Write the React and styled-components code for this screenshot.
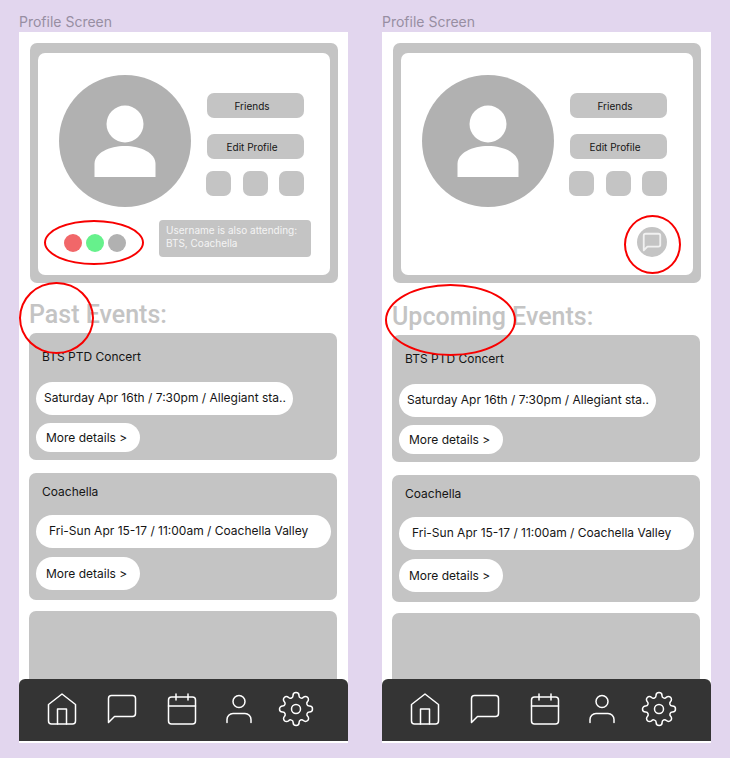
import React from "react";
import styled, { createGlobalStyle } from "styled-components";
import {
  FiHome,
  FiMessageSquare,
  FiCalendar,
  FiUser,
  FiSettings,
} from "react-icons/fi";

const GlobalStyle = createGlobalStyle`
  * { box-sizing: border-box; }
  body {
    margin: 0;
    min-height: 100vh;
    background: #e2d6ee;
    font-family: Inter, "Liberation Sans", sans-serif;
    color: #151515;
  }
  button { font: inherit; color: inherit; border: 0; padding: 0; cursor: pointer; }
  h1, h2, h3, p { margin: 0; font-weight: 400; }
`;

const Board = styled.div`
  display: grid;
  grid-template-columns: 1fr 1fr;
  gap: 34px;
  padding: 13px 19px 15px;
`;

const Frame = styled.section`
  display: flex;
  flex-direction: column;
  min-width: 0;
`;

const FrameLabel = styled.h1`
  height: 19px;
  font-size: 14px;
  line-height: 18px;
  color: #978ea2;
`;

const Screen = styled.div`
  flex: 1;
  display: flex;
  flex-direction: column;
  padding: 11px 0 2px;
  background: #fff;
`;

const ProfileCard = styled.div`
  margin: 0 10px 0 11px;
  padding: 10px 8px 8px;
  border-radius: 7px;
  background: #c4c4c4;
`;

const ProfileInner = styled.div`
  padding: 22px 0 18px;
  border-radius: 7px;
  background: #fff;
`;

const ProfileTop = styled.div`
  display: flex;
  gap: 16px;
  padding-left: 21px;
`;

const Avatar = styled.svg`
  flex: none;
  width: 132px;
  height: 132px;
`;

const Actions = styled.div`
  display: flex;
  flex-direction: column;
  gap: 16px;
  width: 97px;
  padding-top: 18px;
`;

const ActionButton = styled.button`
  height: 25px;
  border-radius: 7px;
  background: #c4c4c4;
  font-size: 10px;
  line-height: 24px;
  padding-right: 7px;
`;

const Tiles = styled.div`
  display: grid;
  grid-template-columns: repeat(3, 25px);
  justify-content: space-between;
  margin: -4px 0 0 -1px;
`;

const Tile = styled.button`
  height: 25px;
  border-radius: 7px;
  background: #c4c4c4;
`;

const ProfileBottom = styled.div`
  display: flex;
  align-items: flex-end;
  justify-content: ${(p) => (p.$end ? "flex-end" : "flex-start")};
  gap: 33px;
  min-height: 37px;
  margin-top: 13px;
  padding: 0 ${(p) => (p.$end ? 26 : 19)}px 0 26px;
`;

const Dots = styled.div`
  position: relative;
  display: flex;
  gap: 4px;
  margin-bottom: 5px;
`;

const Dot = styled.span`
  width: 18px;
  height: 18px;
  border-radius: 50%;
  background: ${(p) => p.$color};
`;

const Note = styled.p`
  flex: 1;
  min-height: 37px;
  padding: 4px 0 7px 7px;
  border-radius: 4px;
  background: #c4c4c4;
  color: #f4f4f4;
  font-size: 10px;
  line-height: 13px;
  white-space: nowrap;
`;

const ChatSpot = styled.div`
  position: relative;
`;

const ChatButton = styled.button`
  display: grid;
  place-items: center;
  width: 30px;
  height: 30px;
  border-radius: 50%;
  background: #c4c4c4;
  color: #f1f1f1;
  svg { width: 22px; height: 22px; }
`;

/* Hand-marked review ring laid over the item it surrounds. */
const Ring = styled.span`
  position: absolute;
  z-index: 2;
  inset: ${(p) => p.$inset};
  border: 2px solid #f80000;
  border-radius: 50%;
  pointer-events: none;
`;

const Heading = styled.h2`
  margin: ${(p) => p.$top}px 10px 3px;
  font-family: Roboto, sans-serif;
  font-size: 25px;
  font-weight: 500;
  line-height: 30px;
  color: #c4c4c4;
  white-space: nowrap;
`;

const Marked = styled.span`
  position: relative;
  display: inline-block;
`;

const EventCard = styled.article`
  display: flex;
  flex-direction: column;
  align-items: flex-start;
  margin: 0 11px ${(p) => (p.$roomy ? 11 : 13)}px 10px;
  padding: ${(p) => (p.$roomy ? "11px 6px 10px 7px" : "16px 6px 8px 7px")};
  border-radius: 7px;
  background: #c4c4c4;
`;

const EventTitle = styled.h3`
  margin: 0 0 ${(p) => (p.$roomy ? 15 : 17)}px 6px;
  font-size: 12px;
  line-height: 16px;
`;

const When = styled.p`
  width: ${(p) => (p.$roomy ? "100%" : "auto")};
  height: 33px;
  margin-bottom: ${(p) => (p.$roomy ? 9 : 8)}px;
  padding: 0 7px 0 ${(p) => (p.$roomy ? 13 : 8)}px;
  border-radius: 17px;
  background: #fff;
  font-size: 12px;
  line-height: 32px;
  white-space: nowrap;
`;

const MoreButton = styled.button`
  height: ${(p) => (p.$roomy ? 33 : 29)}px;
  padding: 0 13px 0 10px;
  border-radius: 17px;
  background: #fff;
  font-size: 12px;
`;

const EmptyEvent = styled.div`
  flex: 1;
  min-height: 66px;
  margin: 0 11px 0 10px;
  border-radius: 7px 7px 0 0;
  background: #c4c4c4;
`;

const NavBar = styled.nav`
  display: grid;
  grid-template-columns: 60fr 60fr 57fr 57fr 36fr;
  padding: 12px 34px 14px 25px;
  border-radius: 6px 6px 0 0;
  background: #343434;
`;

const NavButton = styled.button`
  display: flex;
  width: 36px;
  height: 36px;
  background: none;
  color: #fff;
  svg { width: 36px; height: 36px; stroke-width: 1; }
`;

const NAV_ITEMS = [
  ["Home", FiHome],
  ["Messages", FiMessageSquare],
  ["Calendar", FiCalendar],
  ["Profile", FiUser],
  ["Settings", FiSettings],
];

const EVENTS = [
  { title: "BTS PTD Concert", when: "Saturday Apr 16th / 7:30pm / Allegiant sta.." },
  { title: "Coachella", when: "Fri-Sun Apr 15-17 / 11:00am / Coachella Valley", roomy: true },
];

function ProfileScreen({ word, wordRing, headingTop, children, alignEnd }) {
  return (
    <Frame>
      <FrameLabel>Profile Screen</FrameLabel>
      <Screen>
        <ProfileCard>
          <ProfileInner>
            <ProfileTop>
              <Avatar viewBox="0 0 132 132" aria-hidden="true">
                <circle cx="66" cy="66" r="66" fill="#b1b1b1" />
                <circle cx="66" cy="49" r="18.5" fill="#fff" />
                <path
                  d="M35.5 102V89C35.5 78 50 71 66 71S96.5 78 96.5 89V102Z"
                  fill="#fff"
                />
              </Avatar>
              <Actions>
                <ActionButton>Friends</ActionButton>
                <ActionButton>Edit Profile</ActionButton>
                <Tiles>
                  <Tile aria-label="Shortcut 1" />
                  <Tile aria-label="Shortcut 2" />
                  <Tile aria-label="Shortcut 3" />
                </Tiles>
              </Actions>
            </ProfileTop>
            <ProfileBottom $end={alignEnd}>{children}</ProfileBottom>
          </ProfileInner>
        </ProfileCard>

        <Heading $top={headingTop}>
          <Marked>
            {word}
            <Ring $inset={wordRing} />
          </Marked>{" "}
          Events:
        </Heading>

        {EVENTS.map((event) => (
          <EventCard key={event.title} $roomy={event.roomy}>
            <EventTitle $roomy={event.roomy}>{event.title}</EventTitle>
            <When $roomy={event.roomy}>{event.when}</When>
            <MoreButton $roomy={event.roomy}>More details &gt;</MoreButton>
          </EventCard>
        ))}
        <EmptyEvent />

        <NavBar>
          {NAV_ITEMS.map(([label, Icon]) => (
            <NavButton key={label} aria-label={label}>
              <Icon />
            </NavButton>
          ))}
        </NavBar>
      </Screen>
    </Frame>
  );
}

export default function App() {
  return (
    <>
      <GlobalStyle />
      <Board>
        <ProfileScreen
          word="Past"
          wordRing="-18px -14px -24px -10px"
          headingTop={17}
        >
          <Dots>
            <Dot $color="#f16769" />
            <Dot $color="#66f18c" />
            <Dot $color="#b1b1b1" />
            <Ring $inset="-14px -18px -13px -20px" />
          </Dots>
          <Note>
            Username is also attending:
            <br />
            BTS, Coachella
          </Note>
        </ProfileScreen>
        <ProfileScreen
          word="Upcoming"
          wordRing="-18px -10px -24px -7px"
          headingTop={19}
          alignEnd
        >
          <ChatSpot>
            <ChatButton aria-label="Message">
              <FiMessageSquare />
            </ChatButton>
            <Ring $inset="-12px -14px -17px -13px" />
          </ChatSpot>
        </ProfileScreen>
      </Board>
    </>
  );
}
